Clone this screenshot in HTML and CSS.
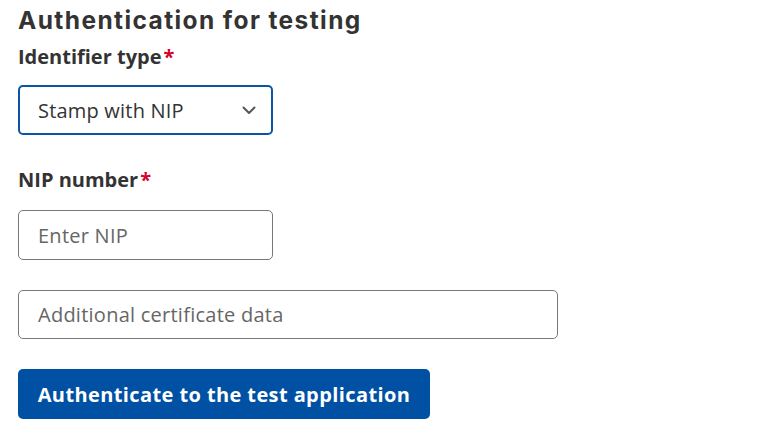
FILE: index.html
```html
<!DOCTYPE html>
<html>
<head>
<meta charset="utf-8">
<link rel="stylesheet" href="styles.css">
</head>
<body>
<form class="auth">
  <h2 class="title">Authentication for testing</h2>
  <label class="label">Identifier type<span class="req">*</span></label>
  <div class="select">
    <span class="select-value">Stamp with NIP</span>
    <svg class="chev" width="14" height="9" viewBox="0 0 14 9"><path d="M1.5 1.5 L7 7 L12.5 1.5" fill="none" stroke="#555" stroke-width="2" stroke-linecap="round" stroke-linejoin="round"/></svg>
  </div>
  <label class="label label-nip">NIP number<span class="req">*</span></label>
  <div class="field short"><span class="ph">Enter NIP</span></div>
  <div class="field long"><span class="ph">Additional certificate data</span></div>
  <button type="button" class="btn">Authenticate to the test application</button>
</form>
</body>
</html>
```
FILE: styles.css
```css
* { box-sizing: border-box; }
html, body { margin: 0; padding: 0; background: #fff; }
body { font-family: "Open Sans", "Liberation Sans", sans-serif; color: #333; }
.auth { display: flex; flex-direction: column; align-items: flex-start; padding: 4px 18px 0; }
.title { margin: 0; font-family: "Inter", "DejaVu Sans", sans-serif; font-weight: 700; font-size: 24.5px; line-height: 32px; color: #333; letter-spacing: 1.4px; }
.label { font-weight: 700; font-size: 20px; line-height: 27px; color: #333; margin-top: 7px; }
.req { color: #d5002f; margin-left: 2px; }
.select { margin-top: 15px; width: 255px; height: 50px; border: 2px solid #0b55a5; border-radius: 5px; display: flex; align-items: center; justify-content: space-between; padding: 0 15px 0 18px; font-size: 20px; letter-spacing: 0.2px; color: #333; }
.chev { margin-top: 1px; }
.label-nip { margin-top: 31px; }
.field { border: 1px solid #777; border-radius: 5px; height: 50px; display: flex; align-items: center; padding: 0 19px; font-size: 20px; letter-spacing: 0.25px; }
.ph { color: #666; }
.short { width: 255px; margin-top: 17px; }
.long { width: 540px; margin-top: 30px; height: 49px; }
.btn { margin-top: 30px; height: 50px; width: 412px; border: 0; border-radius: 5px; background: #0051a3; color: #fff; font-family: "Open Sans", sans-serif; font-weight: 700; font-size: 20px; letter-spacing: 0.4px; padding: 0; }
```
